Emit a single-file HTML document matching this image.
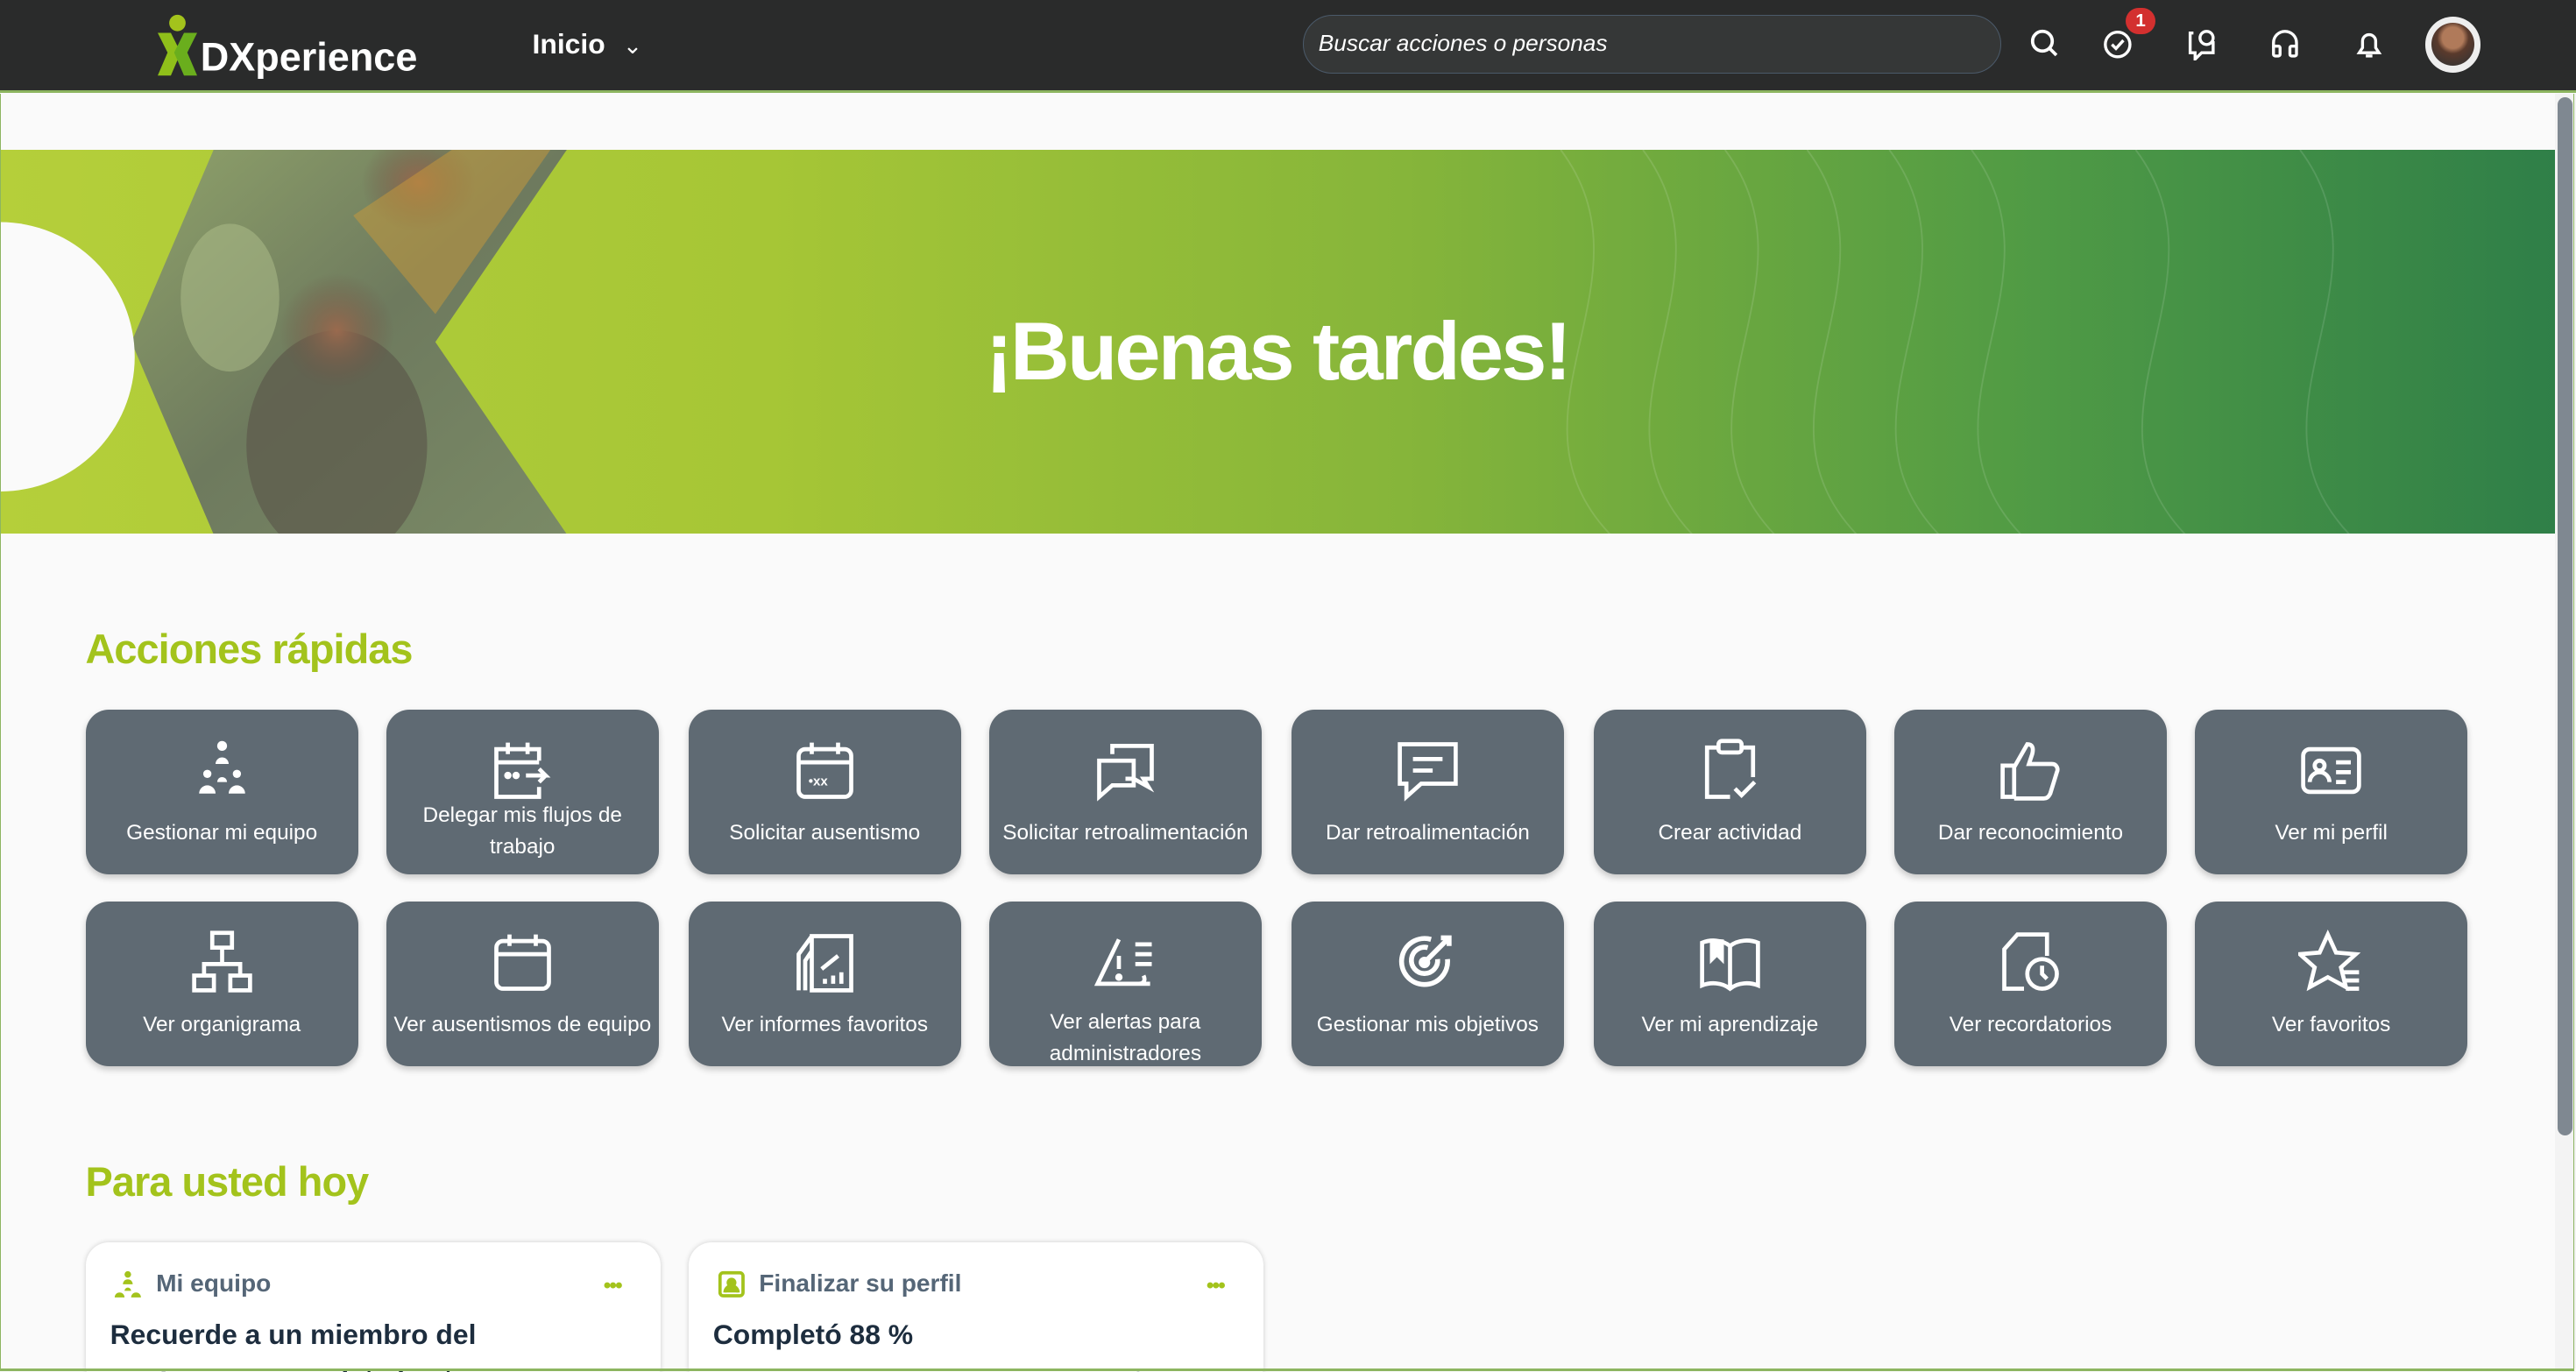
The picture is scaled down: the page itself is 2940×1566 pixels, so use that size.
<!DOCTYPE html>
<html><head><meta charset="utf-8"><style>
html,body{margin:0;padding:0;overflow:hidden}
body{width:1568px;height:835.2px;zoom:1.875;background:#fafafa;font-family:"Liberation Sans",sans-serif;position:relative}
.hdr{position:absolute;left:0;top:0;width:1568px;height:55px;background:#2a2b2b;border-bottom:2px solid #8db560}
.frame{position:absolute;left:0;top:57px;width:1566px;height:776px;border-left:1px solid #8db560;border-right:1px solid #8db560;border-bottom:2px solid #8db560}
.logo{position:absolute;left:96px;top:8px}
.inicio{position:absolute;left:324px;top:17px;color:#fff;font-size:17px;font-weight:bold}
.search{position:absolute;left:793px;top:9px;width:425px;height:36px;border-radius:18px;background:#353737;border:1px solid #4b5a6a;box-sizing:border-box;color:#fff;font-style:italic;font-size:14px;line-height:34px;padding-left:9px}
.ic{position:absolute;top:17px}
.badge{position:absolute;left:1294px;top:5px;width:18px;height:16px;border-radius:8px;background:#d3302f;color:#fff;font-size:11px;font-weight:bold;text-align:center;line-height:16px}
.av{position:absolute;left:1476px;top:10px;width:34px;height:34px;border-radius:50%;background:#eee}
.av div{position:absolute;left:4px;top:4px;width:26px;height:26px;border-radius:50%;background:radial-gradient(circle at 50% 35%,#b07a5a 0 30%,#5a3a2c 45%,#3c3532 80%)}
.banner{position:absolute;left:0;top:91px;width:1555px;height:234px;overflow:hidden;background:linear-gradient(90deg,#b5cf3a 0%,#a6c636 30%,#86b53a 55%,#4f9a45 80%,#2f7f48 100%)}
.banner h1{position:absolute;left:0;width:1555px;top:94px;margin:0;text-align:center;color:#fff;font-size:50px;font-weight:900;letter-spacing:-1.5px}
.sb{position:absolute;left:1555px;top:57px;width:13px;height:776px;background:#f3f3f3}
.sb div{position:absolute;left:2px;top:2px;width:9px;height:632px;border-radius:5px;background:#7f8891}
h2{position:absolute;margin:0;color:#a3c31c;font-size:25px;font-weight:bold;left:52px;letter-spacing:-0.5px}
.tile{position:absolute;width:166px;height:100px;border-radius:14px;background:#5f6a73;box-shadow:0 2px 4px rgba(0,0,0,.2);color:#fff;font-size:13px;text-align:center}
.tile svg{position:absolute;left:63px;top:17px}
.tile span{position:absolute;left:4px;right:4px;top:75px;transform:translateY(-50%);line-height:19px}
.tile span.two{top:64px;transform:none}
.card{position:absolute;top:756px;width:350px;height:90px;border-radius:14px;background:#fff;box-shadow:0 0 3px rgba(0,0,0,.18);overflow:hidden}
.card .t{position:absolute;left:43px;top:17px;color:#556677;font-size:15px;font-weight:bold}
.card .b{position:absolute;left:15px;top:43px;color:#1d2d3e;font-size:17px;font-weight:bold;line-height:27px}
.card .d{position:absolute;right:24px;top:22px;color:#a3c31c;font-size:13px;font-weight:bold;letter-spacing:-1px;line-height:10px}
</style></head><body>
<div class="hdr">
<svg class="logo" width="160" height="40" viewBox="0 0 160 40"><circle cx="12" cy="6" r="5" fill="#a3c31c"/><path d="M0 12h8l6 12-6 14H0l6-14z" fill="#8fbf1a"/><path d="M24 12h-8l-6 12 6 14h8l-6-14z" fill="#6aae1d"/><text x="26" y="35" fill="#fff" font-size="24" font-weight="bold" font-family="Liberation Sans">DXperience</text></svg>
<div class="inicio">Inicio <span style="font-weight:normal;font-size:14px;margin-left:6px">&#8964;</span></div>
<div class="search">Buscar acciones o personas</div>
<svg class="ic" style="left:1235px" width="18" height="20" fill="none" stroke="#fff" stroke-width="2"><circle cx="8" cy="8" r="6"/><path d="M12.5 12.5l4 4"/></svg>
<svg class="ic" style="left:1280px" width="18" height="20" fill="none" stroke="#fff" stroke-width="1.8"><circle cx="9" cy="10" r="7.5"/><path d="M5.5 10l2.5 2.5 4.5-5"/></svg>
<div class="badge">1</div>
<svg class="ic" style="left:1330px" width="20" height="20" fill="none" stroke="#fff" stroke-width="1.8"><path d="M5 3H3v12h3v4l4-4h7V8"/><circle cx="13" cy="6" r="4"/></svg>
<svg class="ic" style="left:1382px" width="18" height="20" fill="none" stroke="#fff" stroke-width="1.8"><path d="M2 12V9a7 7 0 0114 0v3"/><rect x="2" y="11" width="4" height="6" rx="1"/><rect x="12" y="11" width="4" height="6" rx="1"/></svg>
<svg class="ic" style="left:1433px" width="18" height="20" fill="none" stroke="#fff" stroke-width="1.8"><path d="M3 15h12l-2-3V8a4 4 0 00-8 0v4z"/><path d="M7 17h4"/></svg>
<div class="av"><div></div></div>
</div>
<div class="frame"></div>
<div class="banner">
<svg width="1555" height="234" style="position:absolute;left:0;top:0">
<defs><linearGradient id="ph" x1="0" x2="1" y1="0" y2="1"><stop offset="0" stop-color="#8fa26a"/><stop offset=".5" stop-color="#6e7a5e"/><stop offset="1" stop-color="#7a8a66"/></linearGradient>
<radialGradient id="f1"><stop offset="0" stop-color="#9a6a4e"/><stop offset="1" stop-color="#6a5244" stop-opacity="0"/></radialGradient></defs>
<polygon points="130,0 345,0 265,117 345,234 130,234 80,117" fill="url(#ph)"/>
<ellipse cx="205" cy="180" rx="55" ry="70" fill="#5c5a4c" opacity=".7"/>
<circle cx="205" cy="110" r="35" fill="url(#f1)"/>
<ellipse cx="255" cy="20" rx="35" ry="30" fill="url(#f1)"/>
<path d="M215 40l60-40h60l-70 100z" fill="#c99a3a" opacity=".5"/>
<ellipse cx="140" cy="90" rx="30" ry="45" fill="#b0bf8c" opacity=".5"/>
<circle cx="0" cy="126" r="82" fill="#fafafa"/>
<g stroke="#ffffff" stroke-opacity=".12" fill="none"><path d="M950 0c60 80-40 160 30 234"/><path d="M1000 0c60 80-40 160 30 234"/><path d="M1050 0c60 80-40 160 30 234"/><path d="M1100 0c60 80-40 160 30 234"/><path d="M1150 0c60 80-40 160 30 234"/><path d="M1200 0c60 80-40 160 30 234"/><path d="M1300 0c60 80-40 160 30 234"/><path d="M1400 0c60 80-40 160 30 234"/></g>
</svg>
<h1>¡Buenas tardes!</h1>
</div>
<div class="sb"><div></div></div>
<h2 style="top:381px">Acciones rápidas</h2>
<h2 style="top:705px">Para usted hoy</h2>

<div class="tile" style="left:52px;top:432px"><svg width="40" height="40" fill="#fff"><circle cx="20" cy="5" r="3"/><path d="M16 16a4 4 0 018 0z"/><circle cx="11" cy="22" r="2.5"/><circle cx="29" cy="22" r="2.5"/><path d="M6 34a5 5 0 0110 0zM24 34a5 5 0 0110 0z"/><path d="M17 27a3 3 0 016 0z"/></svg><span>Gestionar mi equipo</span></div>
<div class="tile" style="left:235px;top:432px"><svg width="40" height="40" fill="none" stroke="#fff" stroke-width="2.5"><path d="M30 14V7H4v29h26v-6M4 15h26M11 3v7M23 3v7"/><path d="M22 23h12l-4-4M34 23l-4 4"/><circle cx="11" cy="23" r="1" fill="#fff"/><circle cx="16" cy="23" r="1" fill="#fff"/></svg><span class="two" style="top:55px">Delegar mis flujos de trabajo</span></div>
<div class="tile" style="left:419px;top:432px"><svg width="40" height="40" fill="none" stroke="#fff" stroke-width="2.5"><rect x="4" y="7" width="32" height="29" rx="4"/><path d="M4 15h32M12 3v7M28 3v7"/><text x="10" y="29" fill="#fff" stroke="none" font-size="8" font-weight="bold">•xx</text></svg><span>Solicitar ausentismo</span></div>
<div class="tile" style="left:602px;top:432px"><svg width="40" height="40" fill="none" stroke="#fff" stroke-width="2.5"><path d="M12 10V5h24v20h-5l3 5-9-5h-5"/><path d="M4 14h21v15H12l-8 7z"/></svg><span>Solicitar retroalimentación</span></div>
<div class="tile" style="left:786px;top:432px"><svg width="40" height="40" fill="none" stroke="#fff" stroke-width="2.5"><path d="M3 4h34v24H16l-9 8v-8H3z"/><path d="M11 13h18M11 20h12"/></svg><span>Dar retroalimentación</span></div>
<div class="tile" style="left:970px;top:432px"><svg width="40" height="40" fill="none" stroke="#fff" stroke-width="2.5"><path d="M14 6H6v30h14M26 6h8v18"/><rect x="13" y="2" width="14" height="7" rx="2"/><path d="M23 31l4 4 8-8"/></svg><span>Crear actividad</span></div>
<div class="tile" style="left:1153px;top:432px"><svg width="40" height="40" fill="none" stroke="#fff" stroke-width="2.5"><path d="M3 17h7v19H3zM10 18l8-14c3 0 4 2 3 6l-2 6h14c3 0 4 3 3 5l-4 13c-1 2-2 3-4 3H10"/></svg><span>Dar reconocimiento</span></div>
<div class="tile" style="left:1336px;top:432px"><svg width="40" height="40" fill="none" stroke="#fff" stroke-width="2.5"><rect x="3" y="7" width="34" height="26" rx="4"/><circle cx="13" cy="17" r="3"/><path d="M7 27a6 6 0 0112 0M23 15h9M23 21h9M23 27h6"/></svg><span>Ver mi perfil</span></div>
<div class="tile" style="left:52px;top:549px"><svg width="40" height="40" fill="none" stroke="#fff" stroke-width="2.5"><rect x="14" y="2" width="12" height="9"/><rect x="3" y="28" width="12" height="9"/><rect x="25" y="28" width="12" height="9"/><path d="M20 11v8M9 28v-7h22v7M20 19v2"/></svg><span>Ver organigrama</span></div>
<div class="tile" style="left:235px;top:549px"><svg width="40" height="40" fill="none" stroke="#fff" stroke-width="2.5"><rect x="4" y="7" width="32" height="29" rx="4"/><path d="M4 15h32M12 3v7M28 3v7"/></svg><span>Ver ausentismos de equipo</span></div>
<div class="tile" style="left:419px;top:549px"><svg width="40" height="40" fill="none" stroke="#fff" stroke-width="2.5"><path d="M12 4L4 15v22M12 4h24v33H12zM12 4v9L8 19v18"/><path d="M18 24l10-8M20 33v-3M25 33v-5M30 33v-7"/></svg><span>Ver informes favoritos</span></div>
<div class="tile" style="left:602px;top:549px"><svg width="40" height="40" fill="none" stroke="#fff" stroke-width="2.5"><path d="M16 6L3 33h32M28 33c4 0 4-3 3-5"/><path d="M16 16v8"/><circle cx="16" cy="29" r="1" fill="#fff"/><path d="M26 9h10M26 15h10M26 21h10"/></svg><span class="two">Ver alertas para administradores</span></div>
<div class="tile" style="left:786px;top:549px"><svg width="40" height="40" fill="none" stroke="#fff" stroke-width="3"><path d="M32 18a14 14 0 11-10-12"/><path d="M26 18a8 8 0 11-6-7"/><circle cx="18" cy="20" r="2" fill="#fff"/><path d="M18 20L33 5M28 5h5v5"/></svg><span>Gestionar mis objetivos</span></div>
<div class="tile" style="left:970px;top:549px"><svg width="40" height="40" fill="none" stroke="#fff" stroke-width="2.5"><path d="M20 10c-5-4-12-4-17-2v26c5-2 12-2 17 2 5-4 12-4 17-2V8c-5-2-12-2-17 2zM20 10v26"/><path d="M9 6v12l3-3 3 3V6" fill="#fff"/></svg><span>Ver mi aprendizaje</span></div>
<div class="tile" style="left:1153px;top:549px"><svg width="40" height="40" fill="none" stroke="#fff" stroke-width="2.5"><path d="M16 36H4V12l8-9h18v13"/><circle cx="27" cy="27" r="9"/><path d="M27 22v5l3 3"/></svg><span>Ver recordatorios</span></div>
<div class="tile" style="left:1336px;top:549px"><svg width="40" height="40" fill="none" stroke="#fff" stroke-width="2.5"><path d="M18 3l5 11 12 1-9 8 3 12-11-6-11 6 3-12-9-8 12-1z"/><path d="M27 26h10M27 31h10M29 36h8"/></svg><span>Ver favoritos</span></div>

<div class="card" style="left:52px"><svg style="position:absolute;left:17px;top:17px" width="18" height="18" fill="#a3c31c"><circle cx="9" cy="3" r="2"/><path d="M6 9a3 3 0 016 0z"/><path d="M1 17a3 3 0 016 0zM11 17a3 3 0 016 0zM7 13a2 2 0 014 0z"/></svg><div class="t">Mi equipo</div><div class="d">•••</div><div class="b">Recuerde a un miembro del<br>equipo que complete las tareas</div></div>
<div class="card" style="left:419px"><svg style="position:absolute;left:17px;top:17px" width="18" height="18" fill="none" stroke="#a3c31c" stroke-width="2"><rect x="2" y="2" width="14" height="14" rx="2"/><circle cx="9" cy="8" r="2" fill="#a3c31c"/><path d="M5 14a4 4 0 018 0" fill="#a3c31c"/></svg><div class="t">Finalizar su perfil</div><div class="d">•••</div><div class="b">Completó 88 %<br><span style="font-weight:normal;font-size:14px;color:#556677">Para mejorar su perfil, agregue información</span></div></div>
<div class="frame" style="background:none;z-index:5;pointer-events:none"></div>
</body></html>
